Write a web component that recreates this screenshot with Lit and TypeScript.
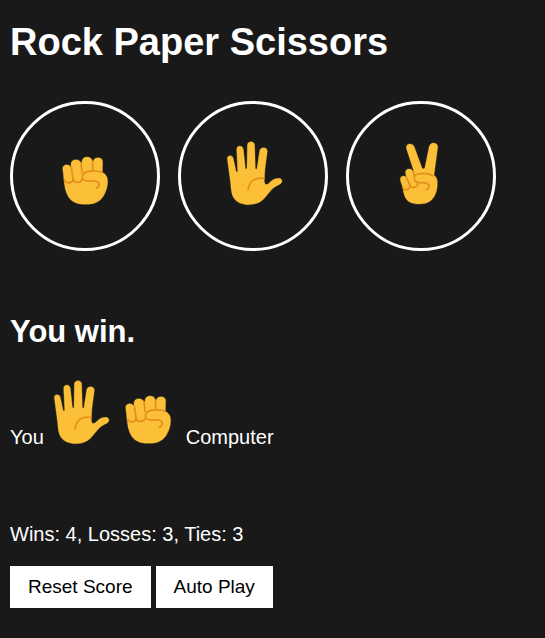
import { LitElement, css, html, svg } from "lit";
import { customElement, property, state } from "lit/decorators.js";

type Move = "rock" | "paper" | "scissors";

const MOVES: Move[] = ["rock", "paper", "scissors"];
const BEATS: Record<Move, Move> = { rock: "scissors", paper: "rock", scissors: "paper" };

const VIEW: Record<Move, string> = {
  rock: "3 -12 204 210",
  paper: "12 18 204 210",
  scissors: "6 18 204 210",
};

const HANDS = {
  rock: svg`
    <path class="skin" d="M38 70C38 64 43 59 50 59C56 59 61 62 63 66L63 56C63 49 69 44 77 44C86 44 91 48 93 53L96 54V50C96 41 103 36 111 36C120 36 126 41 127 48L130 49C130 43 136 38 144 38C153 38 158 43 158 50L157 82C167 87 173 96 173 108C173 126 168 141 159 155C148 171 132 178 107 178C82 178 65 171 55 155C46 141 43 120 42 106Z"/>
    <path class="line" d="M43 105C49 117 66 117 71 103M64 66L70 107M68 103C75 116 93 115 97 102M93 54L96 82M128 50V78M156 82C146 78 127 77 115 79C103 81 97 87 97 96C98 106 109 109 122 108C140 107 150 111 147 121C146 126 143 128 139 130"/>`,
  paper: svg`
    <path class="skin" d="M37 72C36 66 40 62 45 62C51 62 54 65 55 71L63 108C64 112 68 112 68 107L65 43C65 37 69 33 74 33C80 33 84 37 85 43L91 99C92 103 96 103 96 99L97 31C97 24 102 20 108 20C114 20 119 24 119 31L121 100C122 104 125 104 126 100L134 47C135 41 140 38 146 38C153 38 157 43 157 49L150 101L148 132C147 147 152 152 160 146L170 137C180 130 189 129 197 131C203 135 202 142 196 147C185 153 178 155 171 163C161 173 153 186 143 195C130 206 115 209 98 209C81 208 66 203 57 190C49 178 48 160 47 146Z"/>
    <path class="line" d="M147 130C121 126 103 137 99 165"/>`,
  scissors: svg`
    <path class="skin" d="M65 43C62 34 66 28 73 27C80 26 85 29 88 36L110 96C112 103 119 103 120 96L132 37C134 28 139 23 147 24C155 25 159 30 158 38L147 120C154 126 158 134 157 145C157 159 155 172 148 184C139 200 125 207 104 207C80 207 66 201 59 183C56 175 54 165 53 157L47 139C44 130 47 124 54 123C59 122 63 125 65 129L62 117C60 108 64 102 72 102C78 101 82 105 85 110L88 113Z"/>
    <path class="line" d="M53 157C59 167 68 168 73 158C76 154 75 150 73 145M65 129L73 147C77 158 86 161 94 154C99 149 100 144 97 140M84 109L88 121M144 122C132 116 114 114 98 117C88 119 86 128 89 135C92 143 102 144 112 143C127 143 135 149 131 157C130 161 128 163 124 164"/>`,
};

@customElement("rps-hand")
export class RpsHand extends LitElement {
  @property() move: Move = "rock";

  static styles = css`
    :host {
      display: block;
      width: 68px;
    }
    .hand {
      display: block;
      width: 100%;
    }
    .skin {
      fill: #fbc037;
      stroke: #fbc037;
      stroke-width: 1;
    }
    .line {
      fill: none;
      stroke: #e48f1b;
      stroke-width: 5;
      stroke-linecap: round;
      stroke-linejoin: round;
    }
  `;

  render() {
    return html`<svg class="hand" viewBox=${VIEW[this.move]} role="img" aria-label=${this.move}>
      ${HANDS[this.move]}
    </svg>`;
  }
}

@customElement("app-root")
export class AppRoot extends LitElement {
  @state() private player: Move = "paper";
  @state() private computer: Move = "rock";
  @state() private wins = 4;
  @state() private losses = 3;
  @state() private ties = 3;
  private timer = 0;

  static styles = css`
    :host {
      display: block;
      box-sizing: border-box;
      min-height: 100vh;
      padding: 20px 10px;
      background: #191919;
      color: #fff;
      font-family: "Liberation Sans", Arial, sans-serif;
      font-size: 20px;
      line-height: 24px;
    }
    .title {
      margin: 0 0 37px;
      font-size: 38px;
      line-height: 44px;
    }
    .moves {
      display: flex;
      flex-wrap: wrap;
      gap: 18px;
    }
    .move {
      display: flex;
      align-items: center;
      justify-content: center;
      box-sizing: border-box;
      width: 150px;
      height: 150px;
      padding: 0;
      border: 3px solid #fff;
      border-radius: 50%;
      background: transparent;
      cursor: pointer;
    }
    .result {
      margin: 63px 0 30px;
      font-size: 31px;
      line-height: 36px;
    }
    .played {
      display: flex;
      align-items: flex-end;
      line-height: 26px;
    }
    .you {
      margin-right: 2px;
    }
    .computer {
      margin-left: 4px;
    }
    .score {
      margin: 72px 0 20px;
    }
    .actions {
      display: flex;
      gap: 5px;
    }
    .action {
      padding: 10px 18px;
      border: 0;
      background: #fff;
      color: #000;
      font-family: inherit;
      font-size: 19px;
      line-height: 22px;
      cursor: pointer;
    }
  `;

  private get outcome() {
    if (this.player === this.computer) return "Tie.";
    return BEATS[this.player] === this.computer ? "You win." : "You lose.";
  }

  private play(move: Move) {
    this.player = move;
    this.computer = MOVES[Math.floor(Math.random() * 3)];
    if (this.player === this.computer) this.ties++;
    else if (BEATS[this.player] === this.computer) this.wins++;
    else this.losses++;
  }

  private reset() {
    this.wins = this.losses = this.ties = 0;
  }

  private autoPlay() {
    if (this.timer) {
      clearInterval(this.timer);
      this.timer = 0;
    } else {
      this.timer = window.setInterval(() => this.play(MOVES[Math.floor(Math.random() * 3)]), 1000);
    }
  }

  render() {
    return html`
      <h1 class="title">Rock Paper Scissors</h1>
      <div class="moves">
        ${MOVES.map(
          (m) => html`<button class="move" aria-label=${m} @click=${() => this.play(m)}>
            <rps-hand .move=${m}></rps-hand>
          </button>`
        )}
      </div>
      <h2 class="result">${this.outcome}</h2>
      <div class="played">
        <span class="you">You</span>
        <rps-hand .move=${this.player}></rps-hand>
        <rps-hand .move=${this.computer}></rps-hand>
        <span class="computer">Computer</span>
      </div>
      <p class="score">Wins: ${this.wins}, Losses: ${this.losses}, Ties: ${this.ties}</p>
      <div class="actions">
        <button class="action" @click=${this.reset}>Reset Score</button>
        <button class="action" @click=${this.autoPlay}>Auto Play</button>
      </div>
    `;
  }
}
